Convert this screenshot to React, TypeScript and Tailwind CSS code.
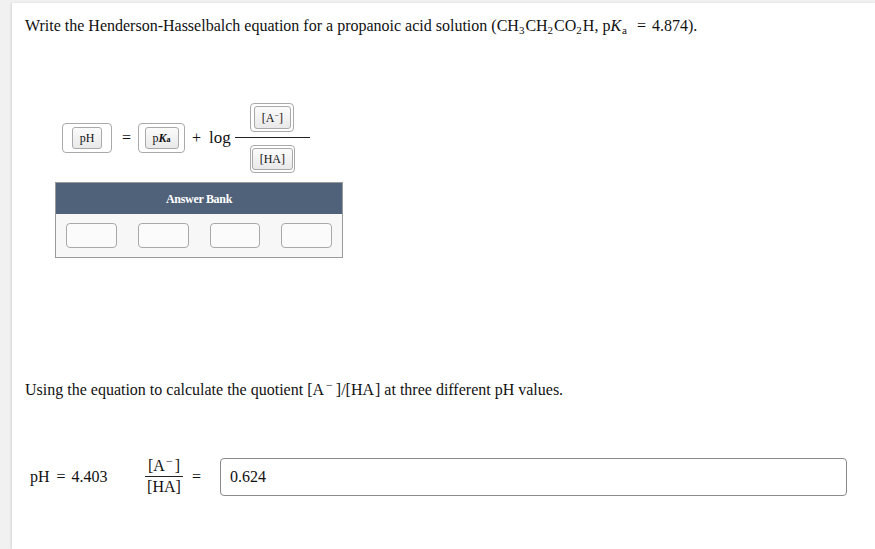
import React from "react";

const serif = { fontFamily: '"Liberation Serif", "Times New Roman", serif' };

function Tile({ children, outerClass }: { children: React.ReactNode; outerClass: string }) {
    return (
        <div className={`flex items-center justify-center border border-[#a9a9a9] rounded-[4px] ${outerClass}`}>
            <div className="flex items-center justify-center h-full px-[7px] border border-[#a9a9a9] rounded-[3px] bg-gradient-to-b from-[#fbfbfb] to-[#e9e9e9] text-[12px] text-[#111]">
                {children}
            </div>
        </div>
    );
}

export default function App() {
    return (
        <div className="min-h-screen bg-[#f1f1f1] pt-[3px] pl-[12px]" style={serif}>
            <div className="bg-white min-h-[546px] shadow-[-1px_0_2px_rgba(0,0,0,0.12)] text-[#111]">
                {/* question 1 */}
                <p className="pl-[13px] pt-[13px] text-[16px] leading-[20px]">
                    Write the Henderson-Hasselbalch equation for a propanoic acid solution (CH<sub className="text-[11px] mr-[1px]">3</sub>CH<sub className="text-[11px] mr-[1px]">2</sub>CO<sub className="text-[11px] mr-[1px]">2</sub>H, p<i>K</i><sub className="text-[11px] ml-[1px]">a</sub>
                    <span className="ml-[10px] mr-[6px]">=</span>4.874).
                </p>

                <div className="flex items-center ml-[50px] mt-[68px] h-[68px]">
                    <Tile outerClass="w-[50px] h-[30px] py-[3px]">pH</Tile>
                    <span className="ml-[10px] mr-[7px] text-[16px]">=</span>
                    <Tile outerClass="w-[47px] h-[30px] py-[3px]">
                        <span>p<b><i>K</i></b><span className="text-[8px] font-bold">a</span></span>
                    </Tile>
                    <span className="ml-[7px] text-[16px]">+</span>
                    <span className="ml-[8px] mr-[4px] text-[17px]">log</span>
                    <div className="flex flex-col items-center w-[75px]">
                        <Tile outerClass="w-[44px] h-[29px] p-[2px]">
                            <span>[A<sup className="text-[8px]">−</sup>]</span>
                        </Tile>
                        <div className="w-full h-px bg-[#222] mt-[5px] mb-[7px]" />
                        <Tile outerClass="w-[45px] h-[28px] p-[2px]">[HA]</Tile>
                    </div>
                </div>

                {/* answer bank */}
                <div className="ml-[43px] mt-[10px] w-[288px] border border-[#9a9a9a]">
                    <div className="h-[31px] bg-[#4f6279] flex items-center justify-center text-white text-[12px] font-bold tracking-[-0.3px]">
                        Answer Bank
                    </div>
                    <div className="bg-[#f7f7f7] flex gap-[21px] px-[10px] pt-[9px] pb-[9px]">
                        <div className="w-[51px] h-[25px] rounded-[4px] border border-[#a9a9a9] bg-[#fbfbfb]" />
                        <div className="w-[51px] h-[25px] rounded-[4px] border border-[#a9a9a9] bg-[#fbfbfb]" />
                        <div className="w-[51px] h-[25px] rounded-[4px] border border-[#a9a9a9] bg-[#fbfbfb]" />
                        <div className="w-[51px] h-[25px] rounded-[4px] border border-[#a9a9a9] bg-[#fbfbfb]" />
                    </div>
                </div>

                {/* question 2 */}
                <p className="pl-[13px] mt-[122px] text-[16px] leading-[20px]">
                    Using the equation to calculate the quotient [A<sup className="text-[12px] ml-[2px] mr-[3px]">−</sup>]/[HA<span className="ml-[1px]">]</span> at three different pH values.
                </p>

                <div className="flex items-center ml-[18px] mt-[57px]">
                    <span className="text-[16px] w-[115px]">pH<span className="ml-[7px] mr-[6px]">=</span>4.403</span>
                    <div className="flex flex-col items-center w-[38px] text-[16px] leading-[18px]">
                        <span>[A<sup className="text-[12px] ml-[1px] mr-[2px]">−</sup>]</span>
                        <div className="w-full h-px bg-[#222] my-[1px]" />
                        <span>[HA]</span>
                    </div>
                    <span className="ml-[9px] text-[16px]">=</span>
                    <div className="ml-[19px] w-[627px] h-[38px] rounded-[4px] border border-[#8a8a8a] flex items-center pl-[9px] text-[16px]">
                        0.624
                    </div>
                </div>
            </div>
        </div>
    );
}
